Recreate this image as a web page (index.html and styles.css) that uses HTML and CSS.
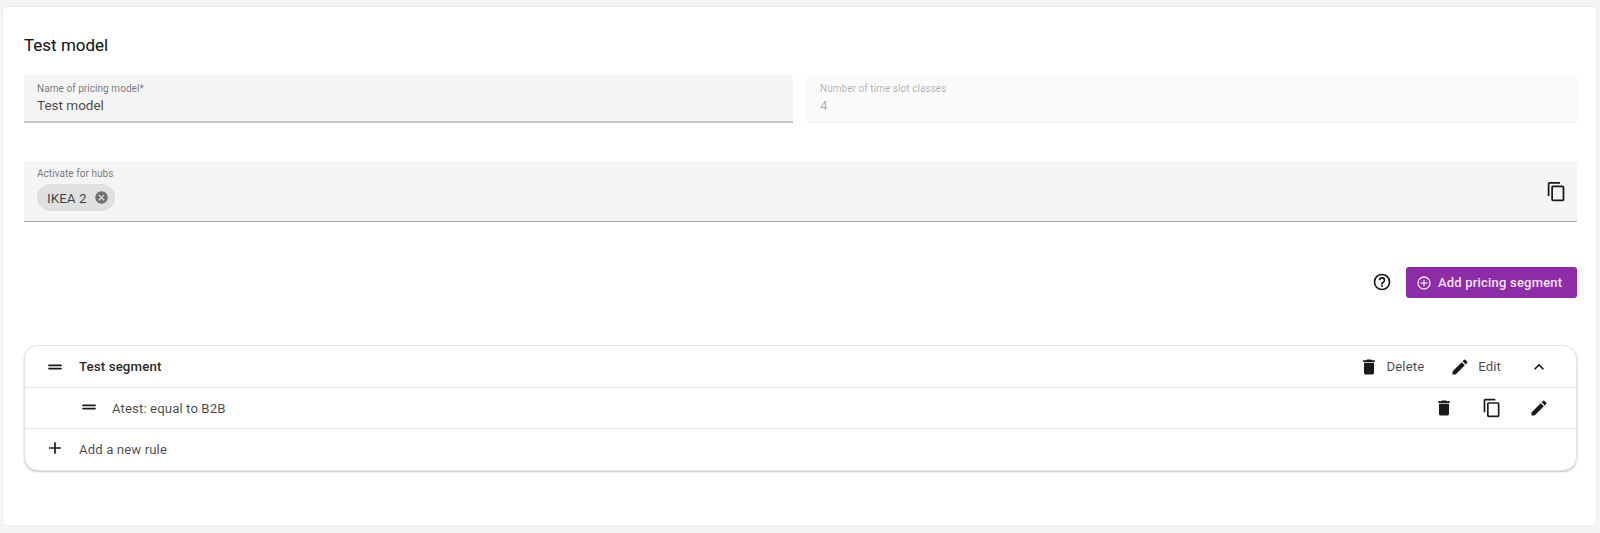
FILE: index.html
```html
<!DOCTYPE html>
<html lang="en">
<head>
<meta charset="utf-8">
<title>Test model</title>
<link rel="stylesheet" href="styles.css">
</head>
<body>
<main class="card">
  <h1 class="title">Test model</h1>
  <div class="two-col">
    <div class="field">
      <span class="label">Name of pricing model*</span>
      <span class="value">Test model</span>
    </div>
    <div class="field disabled">
      <span class="label">Number of time slot classes</span>
      <span class="value">4</span>
    </div>
  </div>
  <div class="field hubs">
    <div class="hubs-main">
      <span class="label">Activate for hubs</span>
      <span class="chip">IKEA 2
        <svg class="chip-x" viewBox="0 0 24 24"><path d="M12 2a10 10 0 1 0 0 20 10 10 0 0 0 0-20zm5 13.6L15.6 17 12 13.4 8.4 17 7 15.6 10.6 12 7 8.4 8.4 7l3.6 3.6L15.6 7 17 8.4 13.4 12z"/></svg>
      </span>
    </div>
    <svg class="icon" viewBox="0 0 24 24"><path d="M16 1H4c-1.100 0-2 .9-2 2v14h2V3h12V1zm3 4H8c-1.100 0-2 .9-2 2v14c0 1.100.9 2 2 2h11c1.100 0 2-.9 2-2V7c0-1.100-.9-2-2-2zm0 16H8V7h11v14z"/></svg>
  </div>
  <div class="actions">
    <svg class="icon help" viewBox="0 0 24 24"><path d="M11 18h2v-2h-2v2zm1-16a10 10 0 1 0 0 20 10 10 0 0 0 0-20zm0 18a8 8 0 1 1 0-16 8 8 0 0 1 0 16zm0-14a4 4 0 0 0-4 4h2c0-1.100.9-2 2-2s2 .9 2 2c0 2-3 1.750-3 5h2c0-2.250 3-2.500 3-5a4 4 0 0 0-4-4z"/></svg>
    <button class="primary" type="button">
      <svg class="btn-icon" viewBox="0 0 24 24"><path d="M13 7h-2v4H7v2h4v4h2v-4h4v-2h-4V7zm-1-5a10 10 0 1 0 0 20 10 10 0 0 0 0-20zm0 18a8 8 0 1 1 0-16 8 8 0 0 1 0 16z"/></svg>
      Add pricing segment
    </button>
  </div>
  <section class="list">
    <div class="row head">
      <svg class="icon drag" viewBox="0 0 24 24"><path d="M4 9h16v2H4zM4 13h16v2H4z"/></svg>
      <span class="row-name">Test segment</span>
      <span class="tool del"><svg class="icon" viewBox="0 0 24 24"><path d="M6 19c0 1.100.9 2 2 2h8c1.100 0 2-.9 2-2V7H6v12zM19 4h-3.500l-1-1h-5l-1 1H5v2h14V4z"/></svg>Delete</span>
      <span class="tool edit"><svg class="icon" viewBox="0 0 24 24"><path d="M3 17.250V21h3.750L17.810 9.940l-3.750-3.750L3 17.250zM20.710 7.040a1 1 0 0 0 0-1.410l-2.340-2.340a1 1 0 0 0-1.410 0l-1.830 1.830 3.750 3.750 1.830-1.830z"/></svg>Edit</span>
      <svg class="icon chevron" viewBox="0 0 24 24"><path d="M7.410 15.410 12 10.830l4.590 4.580L18 14l-6-6-6 6z"/></svg>
    </div>
    <div class="row rule">
      <svg class="icon drag" viewBox="0 0 24 24"><path d="M4 9h16v2H4zM4 13h16v2H4z"/></svg>
      <span class="row-text">Atest: equal to B2B</span>
      <div class="rule-tools">
        <svg class="icon" viewBox="0 0 24 24"><path d="M6 19c0 1.100.9 2 2 2h8c1.100 0 2-.9 2-2V7H6v12zM19 4h-3.500l-1-1h-5l-1 1H5v2h14V4z"/></svg>
        <svg class="icon" viewBox="0 0 24 24"><path d="M16 1H4c-1.100 0-2 .9-2 2v14h2V3h12V1zm3 4H8c-1.100 0-2 .9-2 2v14c0 1.100.9 2 2 2h11c1.100 0 2-.9 2-2V7c0-1.100-.9-2-2-2zm0 16H8V7h11v14z"/></svg>
        <svg class="icon" viewBox="0 0 24 24"><path d="M3 17.250V21h3.750L17.810 9.940l-3.750-3.750L3 17.250zM20.710 7.040a1 1 0 0 0 0-1.410l-2.340-2.340a1 1 0 0 0-1.410 0l-1.830 1.830 3.750 3.750 1.830-1.830z"/></svg>
      </div>
    </div>
    <div class="row add">
      <svg class="icon drag" viewBox="0 0 24 24"><path d="M19 13h-6v6h-2v-6H5v-2h6V5h2v6h6v2z"/></svg>
      <span class="row-text">Add a new rule</span>
    </div>
  </section>
</main>
</body>
</html>
```

FILE: styles.css
```css
* { box-sizing: border-box; }
html, body { margin: 0; height: 533px; overflow: hidden; }
body {
  background: #f5f5f5;
  padding: 7px 4px 8px 3px;
  font-family: Roboto, "Liberation Sans", sans-serif;
  color: rgba(0, 0, 0, 0.87);
}
.card {
  height: 518px;
  background: #fff;
  border-radius: 3px;
  box-shadow: 0 0 2px rgba(0, 0, 0, 0.12);
  padding: 28px 19px 0 21px;
}
.title {
  margin: 0;
  font-size: 17px;
  line-height: 20px;
  font-weight: 400;
  color: rgba(0, 0, 0, 0.92);
  -webkit-text-stroke: 0.2px rgba(0, 0, 0, 0.6);
}
.two-col {
  display: grid;
  grid-template-columns: 769px 770px;
  gap: 14px;
  margin-top: 20px;
}
.field {
  height: 48px;
  background: #f5f5f5;
  border-radius: 4px 4px 0 0;
  border-bottom: 2px solid #c6c6c6;
  padding: 7px 13px 0;
  display: flex;
  flex-direction: column;
}
.label {
  font-size: 10px;
  line-height: 14px;
  letter-spacing: 0.05px;
  color: rgba(0, 0, 0, 0.54);
}
.value {
  font-size: 13.500px;
  line-height: 19px;
  color: rgba(0, 0, 0, 0.72);
}
.disabled {
  background: #fafafa;
  border-bottom: 1px solid #f0f0f0;
}
.disabled .label, .disabled .value { color: rgba(0, 0, 0, 0.32); }
.hubs {
  height: 61px;
  margin-top: 38px;
  border-bottom: 1px solid #a8a8a8;
  flex-direction: row;
  justify-content: space-between;
  padding: 6px 10px 0 13px;
}
.hubs-main {
  display: flex;
  flex-direction: column;
  align-items: flex-start;
  gap: 3px;
}
.chip {
  display: inline-flex;
  align-items: center;
  gap: 7px;
  height: 27px;
  padding: 0 6px 0 10px;
  background: #e0e0e0;
  border-radius: 14px;
  font-size: 13.500px;
  color: rgba(0, 0, 0, 0.72);
}
.chip-x { width: 15px; height: 15px; fill: #6f6f6f; }
.icon { width: 20px; height: 20px; fill: #1a1a1a; flex: none; display: block; }
.hubs > .icon { margin-top: 14px; width: 21px; height: 21px; }
.actions {
  display: flex;
  justify-content: flex-end;
  align-items: center;
  gap: 14px;
  margin-top: 45px;
}
.help { margin: 0 0 2px; }
.primary {
  display: flex;
  align-items: center;
  gap: 6px;
  width: 171px;
  height: 31px;
  padding: 0 0 0 10px;
  border: 0;
  border-radius: 3px;
  background: #8e2ca8;
  color: #f4e6f8;
  font: 500 13px Roboto, sans-serif;
  letter-spacing: 0.2px;
}
.btn-icon { width: 16px; height: 16px; fill: #f0dcf5; }
.list {
  margin-top: 47px;
  border: 1px solid #e4e4e4;
  border-radius: 14px;
  box-shadow: 0 1px 2px rgba(0, 0, 0, 0.24);
  background: #fff;
}
.row {
  display: flex;
  align-items: center;
  height: 41px;
  padding-left: 20px;
  border-bottom: 1px solid #e6e6e6;
}
.head { height: 42px; }
.row:last-child { border-bottom: 0; }
.drag { margin-right: 14px; }
.row-name { font-size: 13.300px; font-weight: 500; flex: 1; letter-spacing: 0.1px; }
.row-text { font-size: 13.200px; flex: 1; color: rgba(0, 0, 0, 0.72); letter-spacing: 0.1px; }
.rule { padding-left: 54px; }
.rule .drag { margin-right: 13px; }
.rule .drag, .add .drag { margin-bottom: 3px; }
.tool {
  display: flex;
  align-items: center;
  gap: 8px;
  font-size: 13.200px;
  color: rgba(0, 0, 0, 0.72);
  letter-spacing: 0.1px;
}
.del { margin-right: 26px; }
.edit { margin-right: 28px; }
.chevron { margin-right: 27px; }
.rule-tools {
  display: flex;
  gap: 27.500px;
  margin-right: 27px;
}
```
